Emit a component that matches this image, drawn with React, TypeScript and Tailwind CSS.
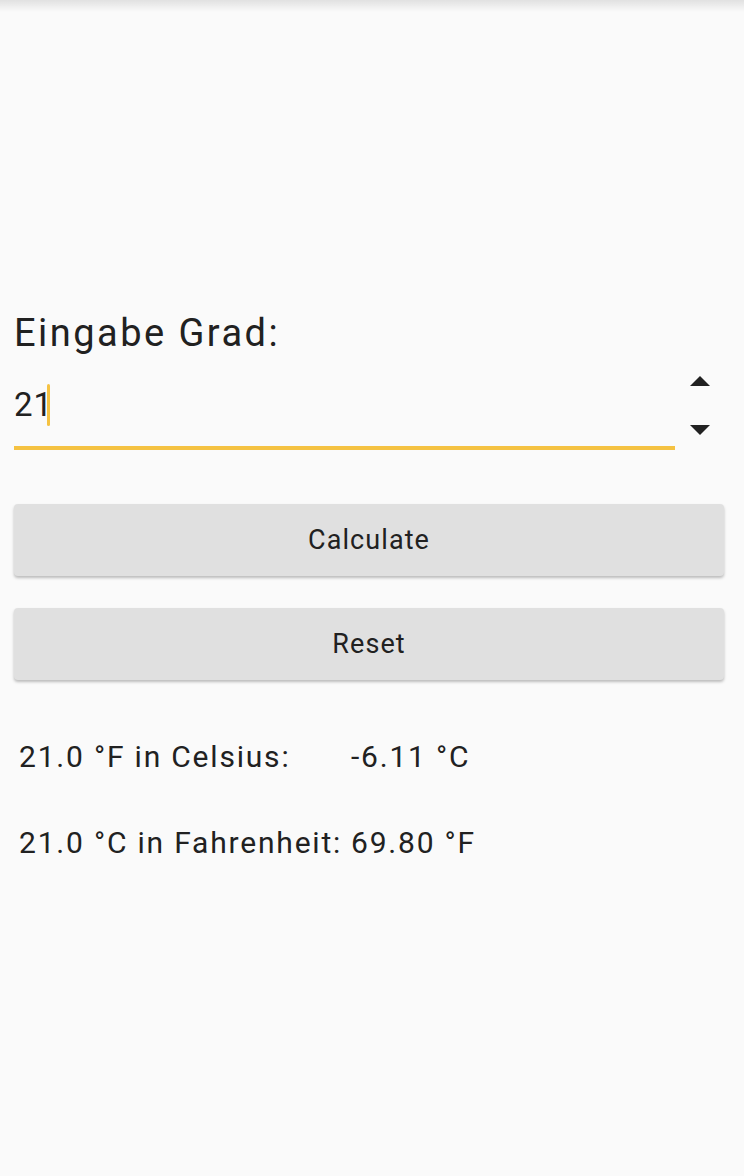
import { useState } from "react";

export default function App() {
  const [value, setValue] = useState<string>("21");
  const deg = parseFloat(value) || 0;
  const celsius = ((deg - 32) * 5) / 9;
  const fahrenheit = (deg * 9) / 5 + 32;

  return (
    <div className="relative min-h-[1176px] w-full bg-[#fafafa] text-[#212121]" style={{ fontFamily: "Roboto, sans-serif" }}>
      <div className="absolute inset-x-0 top-0 h-3 bg-gradient-to-b from-black/10 to-transparent" />

      <div className="w-[724px] pl-[14px] pt-[309px]">
        <label className="block text-[38px] leading-[48px] tracking-[0.065em]">Eingabe Grad:</label>

        <div className="mt-[8px] flex items-start">
          <div className="flex-1 border-b-[4px] border-[#f5c242] pb-[20px] pt-[19px]">
            <div className="flex items-center text-[33px] leading-[40px] tracking-[0.03em]">
              <input
                value={value}
                onChange={(e) => setValue(e.target.value)}
                className="w-[33px] bg-transparent outline-none"
              />
              <span className="h-[42px] w-[3px] rounded-full bg-[#f5c242]" />
            </div>
          </div>
          <div className="flex w-[49px] flex-col items-center pt-[11px]">
            <svg width="20" height="10" viewBox="0 0 20 10">
              <path d="M10 0 L20 10 L0 10 Z" fill="#212121" />
            </svg>
            <svg width="20" height="10" viewBox="0 0 20 10" className="mt-[39px]">
              <path d="M0 0 L20 0 L10 10 Z" fill="#212121" />
            </svg>
          </div>
        </div>

        <div className="mt-[54px] flex flex-col gap-[32px]">
          <button className="h-[72px] rounded-[4px] bg-[#e0e0e0] text-[27px] tracking-[0.04em] shadow-[0_2px_3px_rgba(0,0,0,0.25)]">
            Calculate
          </button>
          <button
            onClick={() => setValue("")}
            className="h-[72px] rounded-[4px] bg-[#e0e0e0] text-[27px] tracking-[0.04em] shadow-[0_2px_3px_rgba(0,0,0,0.25)]"
          >
            Reset
          </button>
        </div>

        <div className="mt-[57px] grid grid-cols-[332px_1fr] gap-y-[46px] pl-[5px] text-[30px] leading-[40px] tracking-[0.06em]">
          <span>{deg.toFixed(1)} °F in Celsius:</span>
          <span>{celsius.toFixed(2)} °C</span>
          <span>{deg.toFixed(1)} °C in Fahrenheit:</span>
          <span>{fahrenheit.toFixed(2)} °F</span>
        </div>
      </div>
    </div>
  );
}
